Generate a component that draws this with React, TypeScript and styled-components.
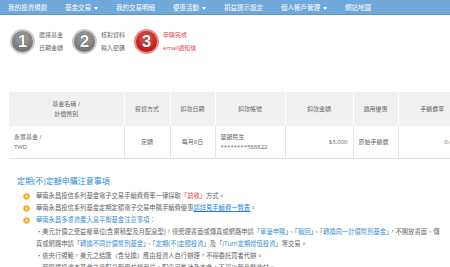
import styled, { createGlobalStyle } from "styled-components";

const GlobalStyle = createGlobalStyle`
  html, body {
    margin: 0;
    padding: 0;
    background: #fff;
  }
  body {
    width: 450px;
    height: 267px;
    overflow: hidden;
    font-family: "Open Sans", "Noto Sans CJK TC", sans-serif;
  }
`;

const Page = styled.div`
  width: 450px;
  height: 267px;
  overflow: hidden;
`;

const NavBar = styled.div`
  display: flex;
  align-items: center;
  gap: 18px;
  height: 15px;
  padding-left: 8px;
  background: #70a8da;
  border-bottom: 1px solid #5e95c8;
  box-sizing: border-box;
`;

const NavItem = styled.span`
  color: #fff;
  font-size: 6.5px;
  white-space: nowrap;
`;

const Caret = styled.span`
  display: inline-block;
  margin-left: 3px;
  border-left: 2.5px solid transparent;
  border-right: 2.5px solid transparent;
  border-top: 3px solid #fff;
  vertical-align: middle;
`;

const Steps = styled.div`
  display: flex;
  align-items: center;
  gap: 9px;
  padding: 14px 0 0 10px;
  height: 25px;
`;

const Step = styled.div`
  display: flex;
  align-items: center;
  gap: 4px;
`;

const Circle = styled.div<{ $active?: boolean }>`
  width: 25px;
  height: 25px;
  border-radius: 50%;
  box-sizing: border-box;
  border: 2px solid ${(p) => (p.$active ? "#f08a8a" : "#c9c9c9")};
  background: ${(p) =>
    p.$active
      ? "radial-gradient(circle at 50% 35%, #ea5a5a 0%, #c42323 60%, #9c1212 100%)"
      : "radial-gradient(circle at 50% 35%, #a8a8a8 0%, #7d7d7d 60%, #5e5e5e 100%)"};
  display: flex;
  align-items: center;
  justify-content: center;
  color: #fff;
  font-family: "Liberation Sans", Arial, sans-serif;
  font-weight: bold;
  font-size: 17px;
  text-shadow: 0 0 1px #333, 0 0 1px #333;
`;

const StepText = styled.div<{ $active?: boolean }>`
  font-size: 6px;
  line-height: 13px;
  color: ${(p) => (p.$active ? "#e6494b" : "#666")};
  white-space: nowrap;
`;

const TableWrap = styled.div`
  padding: 38px 0 0 9px;
`;

const Table = styled.table`
  border-collapse: collapse;
  table-layout: fixed;
  width: 457px;
  font-size: 6px;
  color: #666;
`;

const Th = styled.th<{ $w: number }>`
  width: ${(p) => p.$w}px;
  height: 34px;
  background: #f1f1f1;
  font-weight: normal;
  text-align: center;
  line-height: 10px;
  padding: 0 5px;
  border-left: 1px solid #fff;
  box-sizing: border-box;
  &:first-child {
    border-left: none;
  }
`;

const Td = styled.td<{ $align?: string }>`
  height: 32px;
  text-align: ${(p) => p.$align || "center"};
  line-height: 10px;
  padding: 0 5px;
  border-left: 1px solid #e6e6e6;
  border-bottom: 1px solid #e3e3e3;
  white-space: nowrap;
  overflow: hidden;
  &:first-child {
    border-left: none;
  }
`;

const Notes = styled.div`
  padding: 16px 0 0 17px;
`;

const Title = styled.div`
  font-size: 8px;
  line-height: 12px;
  color: #2e8fd6;
  margin-bottom: 3px;
`;

const List = styled.ul`
  list-style: none;
  margin: 0;
  padding: 0;
`;

const Item = styled.li<{ $blue?: boolean; $sub?: boolean }>`
  display: flex;
  font-size: 6.3px;
  line-height: 12px;
  color: ${(p) => (p.$blue ? "#3b8fd1" : "#666")};
  padding-left: ${(p) => (p.$sub ? "19px" : "7px")};
  white-space: nowrap;
`;

const Flower = styled.span`
  flex: none;
  width: 5px;
  height: 5px;
  margin: 3.5px 7px 0 0;
  border-radius: 50%;
  background: radial-gradient(circle, #ffe27a 0 30%, #f29a1d 45% 100%);
  box-shadow: 0 0 0 0.8px #f7b54a;
`;

const Red = styled.span`
  color: #e03a3a;
`;

const Blue = styled.span`
  color: #3b8fd1;
`;

const LinkText = styled.a`
  color: #1f7fe0;
  text-decoration: underline;
`;

const steps = [
  { n: "1", lines: ["選擇基金", "日期金額"] },
  { n: "2", lines: ["核對資料", "輸入密碼"] },
  { n: "3", lines: ["申購完成", "email通知信"], active: true },
];

const headers: { label: string[]; w: number }[] = [
  { label: ["基金名稱 /", "計價幣別"], w: 115 },
  { label: ["投資方式"], w: 46 },
  { label: ["扣款日期"], w: 45 },
  { label: ["扣款帳號"], w: 70 },
  { label: ["扣款金額"], w: 68 },
  { label: ["適用優惠"], w: 45 },
  { label: ["手續費率"], w: 68 },
];

export default function App() {
  return (
    <Page>
      <GlobalStyle />
      <NavBar>
        <NavItem>我的投資規劃</NavItem>
        <NavItem>
          基金交易<Caret />
        </NavItem>
        <NavItem>我的交易明細</NavItem>
        <NavItem>
          優惠活動<Caret />
        </NavItem>
        <NavItem>損益提示設定</NavItem>
        <NavItem>
          個人帳戶管理<Caret />
        </NavItem>
        <NavItem>網站地圖</NavItem>
      </NavBar>

      <Steps>
        {steps.map((s) => (
          <Step key={s.n}>
            <Circle $active={s.active}>{s.n}</Circle>
            <StepText $active={s.active}>
              {s.lines[0]}
              <br />
              {s.lines[1]}
            </StepText>
          </Step>
        ))}
      </Steps>

      <TableWrap>
        <Table>
          <thead>
            <tr>
              {headers.map((h, i) => (
                <Th key={i} $w={h.w}>
                  {h.label.map((l, j) => (
                    <div key={j}>{l}</div>
                  ))}
                </Th>
              ))}
            </tr>
          </thead>
          <tbody>
            <tr>
              <Td $align="left">
                永豐基金 /<br />
                TWD
              </Td>
              <Td>定額</Td>
              <Td>每月8日</Td>
              <Td $align="left">
                華銀民生
                <br />
                ********588822
              </Td>
              <Td $align="right">$3,000</Td>
              <Td $align="left">原始手續費</Td>
              <Td $align="right">0.60%</Td>
            </tr>
          </tbody>
        </Table>
      </TableWrap>

      <Notes>
        <Title>定期(不)定額申購注意事項</Title>
        <List>
          <Item>
            <Flower />
            華南永昌投信系列基金電子交易手續費費率一律採取<Red>「前收」</Red>方式。
          </Item>
          <Item>
            <Flower />
            華南永昌投信系列基金定期定額電子交易申購手續費優惠
            <LinkText>請詳見手續費一覽表</LinkText>。
          </Item>
          <Item $blue>
            <Flower />
            華南永昌多重資產入息平衡基金注意事項：
          </Item>
          <Item $sub>
            ‧美元計價之受益權單位(含累積型及月配息型)，僅受理書面或傳真或網路申請「<Blue>單筆申購</Blue>」、「<Blue>贖回</Blue>」、「<Blue>轉換同一計價幣別基金</Blue>」，不開放書面、傳
          </Item>
          <Item $sub>
            真或網路申請「<Blue>轉換不同計價幣別基金</Blue>」、「<Blue>定期(不)定額投資</Blue>」及「<Blue>iTurn定期增值投資</Blue>」等交易。
          </Item>
          <Item $sub>‧依央行規範，美元之結匯（含兌換）應由投資人自行辦理，不得委託買者代辦。</Item>
          <Item $sub>‧若選擇投資本基金之月配息型受益權單位，配息可能涉及本金，不得以新臺幣收付。</Item>
        </List>
      </Notes>
    </Page>
  );
}
